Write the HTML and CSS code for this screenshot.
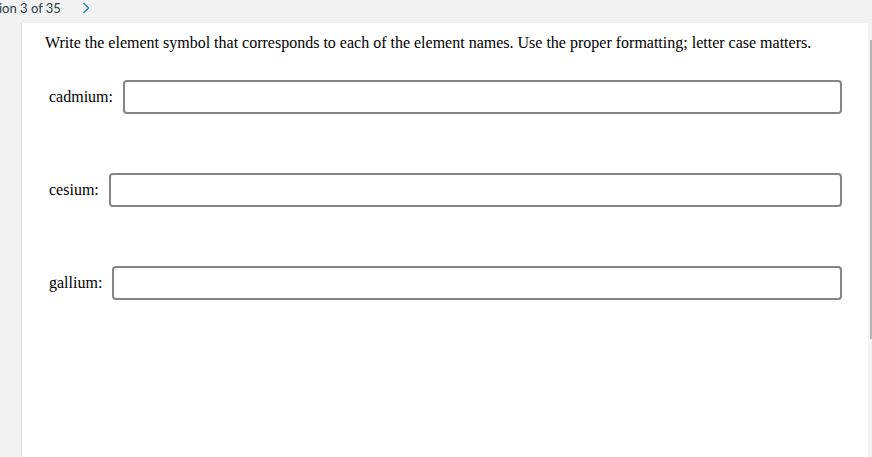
FILE: index.html
```html
<!DOCTYPE html>
<html>
<head>
<meta charset="utf-8">
<link rel="stylesheet" href="styles.css">
</head>
<body>
<div class="topbar">
  <span class="qnum">ion 3 of 35</span>
  <svg class="chev" width="8" height="12" viewBox="0 0 8 12"><path d="M1.5 1 L6.5 6 L1.5 11" fill="none" stroke="#1b8ab0" stroke-width="1.4"/></svg>
</div>
<div class="main">
  <div class="card">
    <p class="prompt">Write the element symbol that corresponds to each of the element names. Use the proper formatting; letter case matters.</p>
    <div class="rows">
      <label class="row"><span class="lbl">cadmium:</span><span class="field"></span></label>
      <label class="row"><span class="lbl">cesium:</span><span class="field"></span></label>
      <label class="row"><span class="lbl">gallium:</span><span class="field"></span></label>
    </div>
  </div>
  <div class="scroll"><div class="thumb"></div></div>
</div>
</body>
</html>
```

FILE: styles.css
```css
html, body {
  margin: 0;
  padding: 0;
  height: 100%;
  overflow: hidden;
}
body {
  background: #f2f2f2;
  font-family: "Liberation Serif", "Times New Roman", serif;
  color: #000;
}
.topbar {
  height: 23px;
  display: flex;
  align-items: flex-start;
  gap: 21px;
  padding-top: 1px;
  box-sizing: border-box;
}
.qnum {
  font-family: Lato, sans-serif;
  font-size: 13px;
  line-height: 14px;
  color: #2a3b44;
  margin-left: -1px;
}
.chev {
  margin-top: 1px;
}
.main {
  display: flex;
  height: calc(100% - 23px);
}
.card {
  margin-left: 22px;
  width: 846px;
  background: #fff;
  box-shadow: -1px 0 1px rgba(0,0,0,0.06);
  padding: 11px 26px 0 23px;
  box-sizing: border-box;
}
.prompt {
  margin: 0;
  font-size: 16px;
  line-height: 18px;
}
.rows {
  margin-top: 28px;
  display: flex;
  flex-direction: column;
  gap: 59px;
  padding-left: 4px;
}
.row {
  display: flex;
  align-items: center;
  gap: 10px;
}
.lbl {
  font-size: 16px;
  line-height: 18px;
  white-space: nowrap;
}
.field {
  flex: 1;
  height: 34px;
  box-sizing: border-box;
  border: 2px solid #858585;
  border-radius: 4px;
  background: #fff;
}
.scroll {
  width: 4px;
  position: relative;
}
.thumb {
  position: absolute;
  left: 2px;
  top: 17px;
  width: 2px;
  height: 299px;
  background: #b5b5b5;
}
```
